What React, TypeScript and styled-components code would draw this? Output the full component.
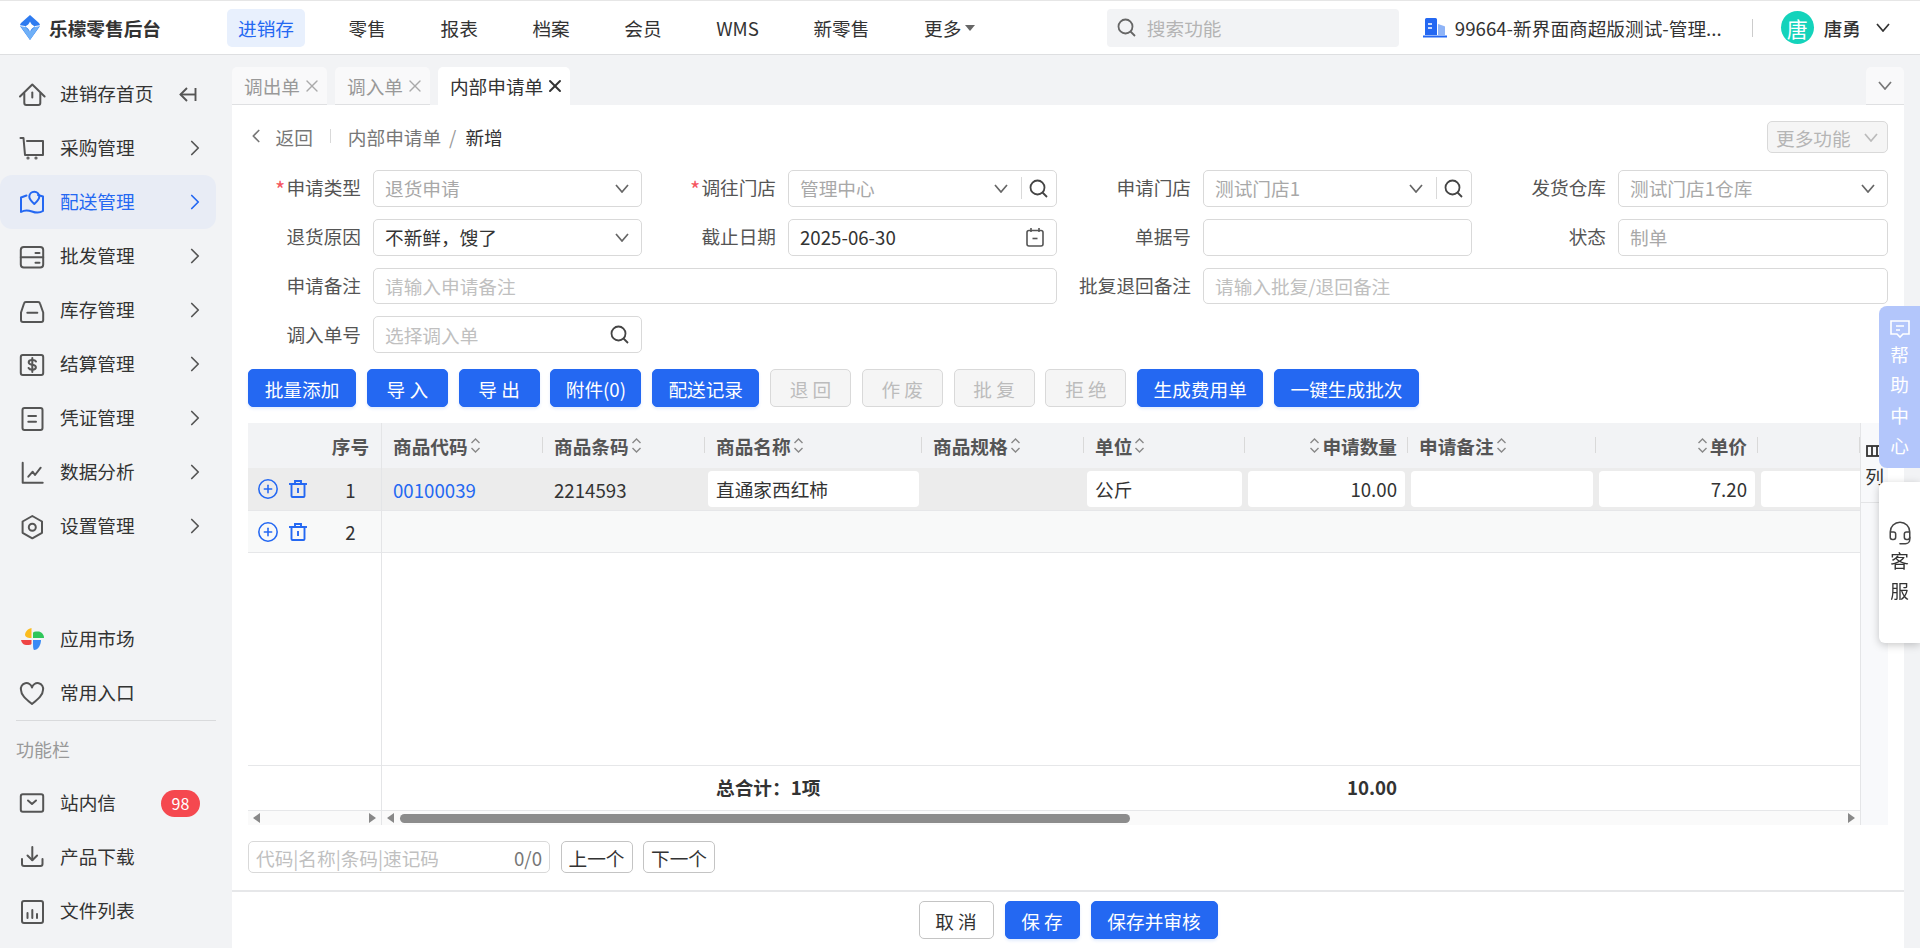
import React from 'react'
import styled, { createGlobalStyle } from 'styled-components'
import { ChevronLeft, ChevronRight, CirclePlus, Headset, X } from 'lucide-react'

const BLUE = '#2468f2'
const COLUMNS = '161px 162px 217px 162px 161px 163px 188px 162px 102px'

const GlobalStyle = createGlobalStyle`
  html, body {
    margin: 0;
    height: 100%;
    overflow: hidden;
    background: #f2f3f5;
  }
  body, button {
    font-family: "Noto Sans CJK SC", "Noto Sans", sans-serif;
    font-size: 18.67px;
    color: #333;
  }
  * {
    box-sizing: border-box;
  }
`

const Root = styled.div`
  height: 100vh;
  display: flex;
  flex-direction: column;
`

/* top bar */
const Header = styled.header`
  height: 55px;
  flex: none;
  display: flex;
  align-items: center;
  background: #fff;
  border-top: 1px solid #e6e6e6;
  border-bottom: 1px solid #dedfe1;
  padding-right: 30px;
`
const Brand = styled.div`
  width: 227px;
  padding-left: 20px;
  display: flex;
  align-items: center;
  gap: 9px;
  font-weight: 700;
  white-space: nowrap;
`
const TopNav = styled.nav`
  display: flex;
  align-items: center;
  gap: 32.6px;
`
const TopNavItem = styled.div<{ $active?: boolean }>`
  height: 38px;
  padding: 0 11px;
  display: flex;
  align-items: center;
  gap: 4px;
  border-radius: 5px;
  white-space: nowrap;
  color: ${(p) => (p.$active ? BLUE : '#333')};
  background: ${(p) => (p.$active ? '#e8f0fd' : 'transparent')};
`
const Caret = styled.span`
  width: 0;
  height: 0;
  border-left: 5px solid transparent;
  border-right: 5px solid transparent;
  border-top: 6px solid #666;
`
const SearchBox = styled.div`
  width: 292px;
  height: 38px;
  margin-left: auto;
  padding: 0 10px;
  display: flex;
  align-items: center;
  gap: 11px;
  background: #f2f3f5;
  border-radius: 4px;
  color: #b4b4b4;
`
const Company = styled.div`
  margin-left: 24px;
  display: flex;
  align-items: center;
  gap: 8px;
  white-space: nowrap;
`
const VDivider = styled.span`
  width: 1px;
  height: 18px;
  margin: 0 28px 0 30px;
  background: #ccc;
`
const Avatar = styled.span`
  width: 33px;
  height: 33px;
  border-radius: 50%;
  background: #14d3bb;
  color: #fff;
  font-size: 21px;
  display: flex;
  align-items: center;
  justify-content: center;
`
const UserName = styled.span`
  margin: 0 15px 0 10px;
  font-weight: 500;
`

/* sidebar */
const Body = styled.div`
  flex: 1;
  min-height: 0;
  display: flex;
`
const Sidebar = styled.aside`
  width: 232px;
  flex: none;
  padding: 12px 0 10px;
  display: flex;
  flex-direction: column;
`
const SideGrow = styled.div`
  flex: 1;
`
const SideItem = styled.div<{ $active?: boolean }>`
  width: 216px;
  height: 54px;
  flex: none;
  padding: 0 16px 0 20px;
  display: flex;
  align-items: center;
  gap: 16px;
  border-radius: 12px;
  white-space: nowrap;
  color: ${(p) => (p.$active ? BLUE : '#333')};
  background: ${(p) => (p.$active ? '#e8ecf5' : 'transparent')};
  svg {
    color: ${(p) => (p.$active ? BLUE : '#555')};
  }
`
const SideLabel = styled.span`
  margin-bottom: 3px;
`
const SideEnd = styled.span<{ $shift?: number }>`
  margin-left: auto;
  margin-right: ${(p) => p.$shift ?? 0}px;
  display: flex;
  align-items: center;
`
const SideIconSvg = styled.svg`
  width: 24px;
  height: 24px;
  flex: none;
  overflow: visible;
  fill: none;
  stroke: currentColor;
  stroke-width: 2;
  stroke-linecap: round;
  stroke-linejoin: round;
`
const Section = styled.div`
  width: 200px;
  height: 56px;
  margin-left: 16px;
  border-top: 1px solid #d9dadc;
  display: flex;
  align-items: center;
  color: #999;
  font-size: 18px;
`
const Badge = styled.span`
  min-width: 39px;
  height: 27px;
  border-radius: 14px;
  background: #f5484f;
  color: #fff;
  font-size: 16px;
  display: flex;
  align-items: center;
  justify-content: center;
`

/* tabs */
const Main = styled.main`
  flex: 1;
  min-width: 0;
  margin-right: 16px;
  display: flex;
  flex-direction: column;
`
const TabBar = styled.div`
  height: 50px;
  flex: none;
  padding-top: 12px;
  display: flex;
  gap: 8px;
`
const Tab = styled.div<{ $active?: boolean }>`
  height: 38px;
  padding: 0 5px 0 12px;
  display: flex;
  align-items: center;
  gap: 2px;
  border-radius: 5px 5px 0 0;
  background: ${(p) => (p.$active ? '#fff' : '#f9f9fa')};
  color: ${(p) => (p.$active ? '#333' : '#999')};
  border-bottom: 1px solid ${(p) => (p.$active ? '#fff' : '#dfe0e2')};
`
const TabMore = styled(Tab)`
  width: 38px;
  margin-left: auto;
  padding: 0;
  justify-content: center;
  color: #777;
`

/* panel */
const Panel = styled.div`
  flex: 1;
  min-height: 0;
  background: #fff;
  padding-top: 16px;
  display: flex;
  flex-direction: column;
`
const Inner = styled.div`
  padding: 0 16px;
`
const CrumbRow = styled.div`
  height: 32px;
  padding-bottom: 2px;
  display: flex;
  align-items: center;
  color: #777;
`
const Back = styled.span`
  margin-left: -3px;
  display: flex;
  align-items: center;
  gap: 8.5px;
`
const CrumbLine = styled.span`
  width: 1px;
  height: 14px;
  margin: 0 16.5px 0 17.5px;
  background: #d9d9d9;
`
const CrumbSep = styled.span`
  margin: 0 9px 0 8px;
  color: #999;
`
const CrumbNow = styled.span`
  color: #333;
`
const MoreButton = styled.div`
  width: 121px;
  height: 32px;
  flex: none;
  margin-top: 2px;
  margin-left: auto;
  padding: 0 9px 0 8px;
  display: flex;
  align-items: center;
  justify-content: space-between;
  background: #f5f5f5;
  border: 1px solid #d9d9d9;
  border-radius: 5px;
  color: #b5b5b5;
`
const FormGrid = styled.div`
  margin-top: 17px;
  display: grid;
  grid-template-columns: 113px 269px 122px 269px 122px 269px 122px 270px;
  grid-auto-rows: 36.75px;
  column-gap: 12px;
  row-gap: 12px;
  align-items: center;
`
const Label = styled.label`
  margin-bottom: 3px;
  text-align: right;
  white-space: nowrap;
  color: #555;
`
const Req = styled.span`
  display: inline-block;
  width: 11.5px;
  font-size: 22px;
  line-height: 1;
  vertical-align: -3px;
  text-align: left;
  color: #f5555f;
`
const Field = styled.div<{ $span?: number; $lookup?: boolean }>`
  height: 100%;
  grid-column: span ${(p) => p.$span ?? 1};
  padding: 0 ${(p) => (p.$lookup ? 8 : 12)}px 0 11px;
  display: flex;
  align-items: center;
  gap: 10px;
  border: 1px solid #d9d9d9;
  border-radius: 5px;
  background: #fff;
  color: #777;
`
const FieldText = styled.span<{ $tone?: 'value' | 'muted' | 'hint' }>`
  flex: 1;
  margin-bottom: 1px;
  white-space: nowrap;
  color: ${(p) => (p.$tone === 'value' ? '#333' : p.$tone === 'muted' ? '#a8a8a8' : '#c0c0c0')};
`
const FieldLine = styled.span`
  width: 1px;
  height: 22px;
  margin: 0 -3px 0 3px;
  background: #d9d9d9;
`

/* buttons */
const ButtonRow = styled.div`
  margin-top: 16px;
  display: flex;
  gap: 10.8px;
`
const Button = styled.button<{ $kind?: 'primary' | 'off' | 'plain'; $w: number }>`
  width: ${(p) => p.$w}px;
  height: 38px;
  flex: none;
  padding: 0;
  font-family: inherit;
  font-size: inherit;
  white-space: nowrap;
  border-radius: 5px;
  color: ${(p) => (p.$kind === 'off' ? '#bcbcbc' : p.$kind === 'plain' ? '#333' : '#fff')};
  background: ${(p) => (p.$kind === 'off' ? '#f5f5f5' : p.$kind === 'plain' ? '#fff' : BLUE)};
  border: 1px solid ${(p) => (p.$kind === 'off' ? '#d9d9d9' : p.$kind === 'plain' ? '#c4c4c4' : BLUE)};
  box-shadow: ${(p) => (p.$kind === 'off' || p.$kind === 'plain' ? 'none' : '0 2px 3px rgba(36, 104, 242, 0.12)')};
`

/* table */
const Table = styled.div`
  margin-top: 16px;
  height: 402px;
  display: flex;
`
const FixedPane = styled.div`
  width: 134px;
  flex: none;
  display: flex;
  flex-direction: column;
  border-right: 1px solid #e4e5e7;
`
const ScrollPane = styled.div`
  width: 1478px;
  flex: none;
  overflow: hidden;
  display: flex;
  flex-direction: column;
`
const ColumnPane = styled.div`
  width: 28px;
  flex: none;
  background: #f8f9fb;
  border-left: 1px solid #e4e5e7;
`
const ColumnPick = styled.div`
  height: 80px;
  padding-top: 22px;
  display: flex;
  flex-direction: column;
  align-items: center;
  gap: 10px;
  line-height: 1;
  border-bottom: 1px solid #e4e5e7;
`
const FixedRow = styled.div<{ $h: number; $bg: string; $plain?: boolean }>`
  height: ${(p) => p.$h}px;
  flex: none;
  display: grid;
  grid-template-columns: 72px 61px;
  align-items: center;
  background: ${(p) => p.$bg};
  border-bottom: ${(p) => (p.$plain ? 'none' : '1px solid #e6e7e9')};
`
const SeqCell = styled.div<{ $head?: boolean }>`
  grid-column: 2;
  text-align: center;
  font-weight: ${(p) => (p.$head ? 700 : 400)};
  color: ${(p) => (p.$head ? '#555' : '#333')};
`
const RowTools = styled.div`
  padding-left: 9px;
  display: flex;
  align-items: center;
  gap: 10px;
  color: ${BLUE};
`
const Grow = styled.div`
  flex: 1;
`
const TotalRow = styled.div`
  height: 45px;
  flex: none;
  padding-bottom: 3px;
  border-top: 1px solid #e6e7e9;
  display: grid;
  grid-template-columns: ${COLUMNS};
  align-items: center;
  font-weight: 700;
`
const BarRow = styled.div`
  height: 15px;
  flex: none;
  padding: 0 5px;
  display: flex;
  align-items: center;
  justify-content: space-between;
  background: #fafafa;
  border-top: 1px solid #e6e7e9;
`
const BarArrow = styled.span<{ $dir: 'left' | 'right' }>`
  width: 0;
  height: 0;
  flex: none;
  border-top: 5px solid transparent;
  border-bottom: 5px solid transparent;
  border-${(p) => (p.$dir === 'left' ? 'right' : 'left')}: 7px solid #888;
`
const BarThumb = styled.span`
  width: 730px;
  height: 9px;
  margin: 0 auto 0 6px;
  border-radius: 5px;
  background: #8c8c8c;
`
const DataRow = styled.div<{ $h: number; $bg: string; $plain?: boolean }>`
  height: ${(p) => p.$h}px;
  flex: none;
  display: grid;
  grid-template-columns: ${COLUMNS};
  align-items: center;
  background: ${(p) => p.$bg};
  border-bottom: ${(p) => (p.$plain ? 'none' : '1px solid #e6e7e9')};
`
const HeadCell = styled.div<{ $right?: boolean }>`
  position: relative;
  height: 100%;
  padding: 0 11px;
  display: flex;
  align-items: center;
  justify-content: ${(p) => (p.$right ? 'flex-end' : 'flex-start')};
  gap: 2px;
  font-weight: 700;
  color: #555;
  white-space: nowrap;
  &::after {
    content: '';
    position: absolute;
    right: 0;
    top: 14px;
    width: 1px;
    height: 16px;
    background: #d9d9d9;
  }
`
const Cell = styled.div<{ $right?: boolean; $link?: boolean }>`
  padding: 0 11px;
  text-align: ${(p) => (p.$right ? 'right' : 'left')};
  color: ${(p) => (p.$link ? BLUE : '#333')};
  white-space: nowrap;
`
const CellInput = styled.div<{ $right?: boolean; $open?: boolean }>`
  height: 36px;
  margin: 0 ${(p) => (p.$open ? 0 : 3)}px 1px 3px;
  padding: 0 8px;
  display: flex;
  align-items: center;
  justify-content: ${(p) => (p.$right ? 'flex-end' : 'flex-start')};
  background: #fff;
  border-radius: ${(p) => (p.$open ? '4px 0 0 4px' : '4px')};
`

/* pager */
const Pager = styled.div`
  margin-top: 16px;
  display: flex;
  gap: 10.5px;
`
const PagerInput = styled.div`
  width: 302px;
  height: 32px;
  padding: 0 7px;
  display: flex;
  align-items: center;
  justify-content: space-between;
  color: #c0c0c0;
  border: 1px solid #d9d9d9;
  border-radius: 5px;
`
const PagerCount = styled.span`
  color: #777;
`
const PagerButton = styled.div`
  width: 72px;
  height: 32px;
  display: flex;
  align-items: center;
  justify-content: center;
  border: 1px solid #c4c4c4;
  border-radius: 5px;
`
const Footer = styled.div`
  margin-top: auto;
  height: 58px;
  padding-top: 9px;
  display: flex;
  justify-content: center;
  gap: 11px;
  border-top: 2px solid #e6e7e9;
`

/* floating tabs on the right edge */
const HelpTab = styled.div`
  position: fixed;
  top: 306px;
  right: 0;
  width: 41px;
  height: 162px;
  padding-top: 14px;
  display: flex;
  flex-direction: column;
  align-items: center;
  gap: 11.4px;
  line-height: 1;
  color: #fff;
  background: #b3c6fb;
  border-radius: 8px 0 0 8px;
`
const HelpGlyph = styled.svg`
  margin-bottom: -5px;
  fill: none;
  stroke: #fff;
  stroke-width: 1.6;
`
const ServiceTab = styled.div`
  position: fixed;
  top: 482px;
  right: 0;
  width: 41px;
  height: 161px;
  padding-top: 38px;
  display: flex;
  flex-direction: column;
  align-items: center;
  gap: 11.4px;
  line-height: 1;
  background: #fff;
  border-radius: 6px 0 0 6px;
  box-shadow: 0 2px 8px rgba(0, 0, 0, 0.22);
`
const ServiceGlyph = styled(Headset)`
  margin-bottom: -6px;
`

const sideIcons: Record<string, React.ReactNode> = {
  home: (
    <>
      <path d="M0 14.5 12.3 2.5l12.3 12" />
      <path d="M4.3 11.5V21a2 2 0 0 0 2 2h12a2 2 0 0 0 2-2v-9.5" />
      <path d="M12.3 10.5v5" />
    </>
  ),
  cart: (
    <>
      <path d="M.5 2h3l1.5 17h18V5H7" />
      <circle cx="8" cy="22" r=".6" />
      <circle cx="16" cy="22" r=".6" />
    </>
  ),
  delivery: (
    <>
      <path d="M6.5 5.5 1 7.5V22c4-2.5 7-2 11-.5s8 1.5 11-.5V6.5L18 5" />
      <path d="M14.3 1.7c-2.8 0-5 2.2-5 5 0 2.6 2.5 5 5 7.3 2.5-2.3 5-4.700 5-7.300 0-2.800-2.200-5-5-5z" />
    </>
  ),
  wholesale: (
    <>
      <rect x=".8" y="3" width="22.4" height="20.5" rx="3" />
      <path d="M.8 13.3h22.4" />
      <path d="M15.500 9h4" />
      <path d="M15.500 18.700h4" />
    </>
  ),
  stock: (
    <>
      <path d="M1 14.500 4 5.500A2 2 0 0 1 6 4h12a2 2 0 0 1 2 1.500l3.200 9V22a2 2 0 0 1-2 2H3a2 2 0 0 1-2-2z" />
      <path d="M7.300 14.700h10" />
    </>
  ),
  settle: (
    <>
      <rect x=".8" y="3" width="22.4" height="20" rx="2" />
      <path d="M16 9.500c-.5-1-1.800-1.500-3.700-1.500-2.300 0-3.600.9-3.600 2.300 0 1.500 1.300 2.100 3.600 2.500 2.300.4 3.600 1.100 3.600 2.500 0 1.500-1.400 2.400-3.600 2.400-1.900 0-3.200-.6-3.700-1.700" />
      <path d="M12.300 6v14" />
    </>
  ),
  voucher: (
    <>
      <rect x="2.5" y="2" width="20" height="22" rx="2" />
      <path d="M8.300 10H16" />
      <path d="M8.300 15.700H16" />
    </>
  ),
  chart: (
    <>
      <path d="M2.700 2.700V22.700h20" />
      <path d="M8.300 16.700l4.400-5 2.300 3.300 5.700-7.300" />
    </>
  ),
  settings: (
    <>
      <path d="M12.300 2l9.700 5.500v11.300l-9.700 5.500-9.700-5.500V7.500z" />
      <circle cx="12.3" cy="13.2" r="3.5" />
    </>
  ),
  heart: <path d="M12 23C6 18 1 14 1 9a5.500 5.500 0 0 1 11-2.500A5.500 5.500 0 0 1 23 9c0 5-5 9-11 14z" />,
  mail: (
    <>
      <rect x=".8" y="3.2" width="22.4" height="17.6" rx="2" />
      <path d="M8 9.500l4 3.500 4-3.500" />
    </>
  ),
  download: (
    <>
      <path d="M12.300 2v13" />
      <path d="M7.500 10.500l4.800 4.800 4.800-4.800" />
      <path d="M2 14v5a2 2 0 0 0 2 2h16.500a2 2 0 0 0 2-2v-5" />
    </>
  ),
  files: (
    <>
      <rect x="2" y="2" width="21" height="22" rx="2" />
      <path d="M7.500 14v5" />
      <path d="M12.300 11v8" />
      <path d="M17 15v4" />
    </>
  ),
}

const SideIcon = ({ name }: { name: string }) => <SideIconSvg viewBox="0 0 24 24">{sideIcons[name]}</SideIconSvg>

const Pinwheel = () => (
  <svg width="24" height="24" viewBox="0 0 24 24" style={{ overflow: 'visible', flex: 'none' }}>
    <path d="M11.500 11C8.500 11 5.500 10.500 5 8c0-3 2.500-6 6.500-7z" fill="#fbbc1e" />
    <path d="M13 11V6c0-1.500 2-1.500 5-1.500S24 7 24 11z" fill="#2fc65a" />
    <path d="M13 13h8c0 5-3 10-7 10-1-1-1-4-1-10z" fill="#3b8bf5" />
    <path d="M11.500 13v3.500C11.500 18 9 18 6 18s-4.500-3-5-5z" fill="#ef4444" />
  </svg>
)

const Logo = () => (
  <svg width="20" height="25" viewBox="0 0 20 25">
    <path d="M10 0 19 8c1.300 1.500 1.300 3 0 4.500L10 25 1 12.500C-.3 11-.3 9.500 1 8z" fill="#2e7bf0" />
    <path d="M.5 11 5 11.500 10 17l5-5.500 4.500-.5L10 25z" fill="#6fb0f7" />
    <path d="M10 6.500c.8 2.300 2.400 4 5 5-2.600 1.300-4.200 3-5 5.500-.8-2.500-2.400-4.200-5-5.500 2.600-1 4.200-2.700 5-5z" fill="#fff" />
    <path d="M0 10.700 5 11.500M20 10.700l-5 .8" stroke="#fff" strokeWidth="1" />
  </svg>
)

const BuildingIcon = () => (
  <svg width="24" height="20" viewBox="0 0 24 20">
    <path d="M2 1.500A1.500 1.500 0 0 1 3.500 0h9A1.500 1.500 0 0 1 14 1.500V17H2z" fill={BLUE} />
    <path d="M15 6l6 2a1 1 0 0 1 1 1v8h-7z" fill="#8fb4f7" />
    <path d="M5 6h4M5 10h4" stroke="#fff" strokeWidth="1.6" />
    <path d="M0 18.500h24" stroke={BLUE} strokeWidth="2" />
  </svg>
)

const SortIcon = () => (
  <svg width="11" height="17" viewBox="0 0 11 17" fill="none" stroke="#888" strokeWidth="1.4">
    <path d="M1.500 6 5.500 2l4 4" />
    <path d="M1.500 11l4 4 4-4" />
  </svg>
)

const TrashIcon = () => (
  <svg width="18" height="18" viewBox="0 0 18 18" fill="none" stroke="currentColor" strokeWidth="1.9">
    <path d="M0 4h18" />
    <path d="M6 4V1h6v3" />
    <rect x="2.5" y="4" width="13" height="13" rx="1" />
    <path d="M9 8v5" />
  </svg>
)

const CalendarIcon = () => (
  <svg width="18" height="20" viewBox="0 0 18 20" fill="none" stroke="#555" strokeWidth="1.6">
    <rect x="1" y="3.5" width="16" height="15.5" rx="2" />
    <path d="M5 1v4M13 1v4" />
    <path d="M6.500 11.500h5" />
  </svg>
)

const ColumnsIcon = () => (
  <svg width="17" height="12" viewBox="0 0 17 12" fill="none" stroke="#333" strokeWidth="1.8">
    <rect x="1" y="1" width="15" height="10" />
    <path d="M6 1v10M11 1v10" />
  </svg>
)

const CollapseIcon = () => (
  <svg width="18" height="15" viewBox="0 0 18 15" fill="none" stroke="currentColor" strokeWidth="1.9">
    <path d="M8 1 1.500 7.500 8 14" />
    <path d="M1.500 7.500H16" />
    <path d="M16.500 1v13" />
  </svg>
)

const ChevronGlyph = ({ color = '#666', w = 14 }: { color?: string; w?: number }) => (
  <svg width={w} height={(w * 9) / 14} viewBox="0 0 14 9" fill="none" stroke={color} strokeWidth="1.7" style={{ flex: 'none' }}>
    <path d="M1 1l6 7 6-7" />
  </svg>
)

const SearchGlyph = ({ color = '#444' }: { color?: string }) => (
  <svg width="19" height="19" viewBox="0 0 19 19" fill="none" stroke={color} strokeWidth="1.8" style={{ flex: 'none' }}>
    <circle cx="8.5" cy="8.5" r="7" />
    <path d="M13.500 13.500l4.500 4.500" />
  </svg>
)

const mainMenu = [
  { icon: 'cart', label: '采购管理' },
  { icon: 'delivery', label: '配送管理', active: true },
  { icon: 'wholesale', label: '批发管理' },
  { icon: 'stock', label: '库存管理' },
  { icon: 'settle', label: '结算管理' },
  { icon: 'voucher', label: '凭证管理' },
  { icon: 'chart', label: '数据分析' },
  { icon: 'settings', label: '设置管理' },
]

const topNav = ['零售', '报表', '档案', '会员', 'WMS', '新零售']

const actionButtons = [
  { text: '批量添加', w: 108 },
  { text: '导 入', w: 81 },
  { text: '导 出', w: 81 },
  { text: '附件(0)', w: 91 },
  { text: '配送记录', w: 107 },
  { text: '退 回', w: 81, off: true },
  { text: '作 废', w: 81, off: true },
  { text: '批 复', w: 81, off: true },
  { text: '拒 绝', w: 81, off: true },
  { text: '生成费用单', w: 126 },
  { text: '一键生成批次', w: 145 },
]

export default function App() {
  return (
    <Root>
      <GlobalStyle />
      <Header>
        <Brand>
          <Logo />
          乐檬零售后台
        </Brand>
        <TopNav>
          <TopNavItem $active>进销存</TopNavItem>
          {topNav.map((item) => (
            <TopNavItem key={item}>{item}</TopNavItem>
          ))}
          <TopNavItem>
            更多
            <Caret />
          </TopNavItem>
        </TopNav>
        <SearchBox>
          <SearchGlyph color="#666" />
          搜索功能
        </SearchBox>
        <Company>
          <BuildingIcon />
          99664-新界面商超版测试-管理...
        </Company>
        <VDivider />
        <Avatar>唐</Avatar>
        <UserName>唐勇</UserName>
        <ChevronGlyph color="#333" />
      </Header>
      <Body>
        <Sidebar>
          <SideItem>
            <SideIcon name="home" />
            <SideLabel>进销存首页</SideLabel>
            <SideEnd $shift={3}>
              <CollapseIcon />
            </SideEnd>
          </SideItem>
          {mainMenu.map((item) => (
            <SideItem key={item.label} $active={item.active}>
              <SideIcon name={item.icon} />
              <SideLabel>{item.label}</SideLabel>
              <SideEnd $shift={-8}>
                <ChevronRight size={26} strokeWidth={1.6} />
              </SideEnd>
            </SideItem>
          ))}
          <SideGrow />
          <SideItem>
            <Pinwheel />
            <SideLabel>应用市场</SideLabel>
          </SideItem>
          <SideItem>
            <SideIcon name="heart" />
            <SideLabel>常用入口</SideLabel>
          </SideItem>
          <Section>功能栏</Section>
          <SideItem>
            <SideIcon name="mail" />
            <SideLabel>站内信</SideLabel>
            <SideEnd>
              <Badge>98</Badge>
            </SideEnd>
          </SideItem>
          <SideItem>
            <SideIcon name="download" />
            <SideLabel>产品下载</SideLabel>
          </SideItem>
          <SideItem>
            <SideIcon name="files" />
            <SideLabel>文件列表</SideLabel>
          </SideItem>
        </Sidebar>
        <Main>
          <TabBar>
            <Tab>
              调出单
              <X size={20} strokeWidth={1.6} color="#aaa" />
            </Tab>
            <Tab>
              调入单
              <X size={20} strokeWidth={1.6} color="#aaa" />
            </Tab>
            <Tab $active>
              内部申请单
              <X size={20} strokeWidth={2.4} />
            </Tab>
            <TabMore>
              <ChevronGlyph color="#777" />
            </TabMore>
          </TabBar>
          <Panel>
            <Inner>
              <CrumbRow>
                <Back>
                  <ChevronLeft size={22} strokeWidth={1.8} />
                  返回
                </Back>
                <CrumbLine />
                内部申请单
                <CrumbSep>/</CrumbSep>
                <CrumbNow>新增</CrumbNow>
                <MoreButton>
                  更多功能
                  <ChevronGlyph color="#bbb" />
                </MoreButton>
              </CrumbRow>
              <FormGrid>
                <Label>
                  <Req>*</Req>申请类型
                </Label>
                <Field>
                  <FieldText $tone="muted">退货申请</FieldText>
                  <ChevronGlyph />
                </Field>
                <Label>
                  <Req>*</Req>调往门店
                </Label>
                <Field $lookup>
                  <FieldText $tone="muted">管理中心</FieldText>
                  <ChevronGlyph />
                  <FieldLine />
                  <SearchGlyph />
                </Field>
                <Label>申请门店</Label>
                <Field $lookup>
                  <FieldText $tone="muted">测试门店1</FieldText>
                  <ChevronGlyph />
                  <FieldLine />
                  <SearchGlyph />
                </Field>
                <Label>发货仓库</Label>
                <Field>
                  <FieldText $tone="muted">测试门店1仓库</FieldText>
                  <ChevronGlyph />
                </Field>

                <Label>退货原因</Label>
                <Field>
                  <FieldText $tone="value">不新鲜，馊了</FieldText>
                  <ChevronGlyph />
                </Field>
                <Label>截止日期</Label>
                <Field>
                  <FieldText $tone="value">2025-06-30</FieldText>
                  <CalendarIcon />
                </Field>
                <Label>单据号</Label>
                <Field />
                <Label>状态</Label>
                <Field>
                  <FieldText $tone="muted">制单</FieldText>
                </Field>

                <Label>申请备注</Label>
                <Field $span={3}>
                  <FieldText>请输入申请备注</FieldText>
                </Field>
                <Label>批复退回备注</Label>
                <Field $span={3}>
                  <FieldText>请输入批复/退回备注</FieldText>
                </Field>

                <Label>调入单号</Label>
                <Field>
                  <FieldText>选择调入单</FieldText>
                  <SearchGlyph />
                </Field>
              </FormGrid>
              <ButtonRow>
                {actionButtons.map((b) => (
                  <Button key={b.text} $kind={b.off ? 'off' : 'primary'} $w={b.w}>
                    {b.text}
                  </Button>
                ))}
              </ButtonRow>
              <Table>
                <FixedPane>
                  <FixedRow $h={45} $bg="#f2f3f5" $plain>
                    <SeqCell $head>序号</SeqCell>
                  </FixedRow>
                  <FixedRow $h={43} $bg="#ececec">
                    <RowTools>
                      <CirclePlus size={22} strokeWidth={1.7} />
                      <TrashIcon />
                    </RowTools>
                    <SeqCell>1</SeqCell>
                  </FixedRow>
                  <FixedRow $h={42} $bg="#f8f9f9">
                    <RowTools>
                      <CirclePlus size={22} strokeWidth={1.7} />
                      <TrashIcon />
                    </RowTools>
                    <SeqCell>2</SeqCell>
                  </FixedRow>
                  <Grow />
                  <TotalRow />
                  <BarRow>
                    <BarArrow $dir="left" />
                    <BarArrow $dir="right" />
                  </BarRow>
                </FixedPane>
                <ScrollPane>
                  <DataRow $h={45} $bg="#f2f3f5" $plain>
                    <HeadCell>
                      商品代码
                      <SortIcon />
                    </HeadCell>
                    <HeadCell>
                      商品条码
                      <SortIcon />
                    </HeadCell>
                    <HeadCell>
                      商品名称
                      <SortIcon />
                    </HeadCell>
                    <HeadCell>
                      商品规格
                      <SortIcon />
                    </HeadCell>
                    <HeadCell>
                      单位
                      <SortIcon />
                    </HeadCell>
                    <HeadCell $right>
                      <SortIcon />
                      申请数量
                    </HeadCell>
                    <HeadCell>
                      申请备注
                      <SortIcon />
                    </HeadCell>
                    <HeadCell $right>
                      <SortIcon />
                      单价
                    </HeadCell>
                    <HeadCell />
                  </DataRow>
                  <DataRow $h={43} $bg="#ececec">
                    <Cell $link>00100039</Cell>
                    <Cell>2214593</Cell>
                    <CellInput>直通家西红柿</CellInput>
                    <Cell />
                    <CellInput>公斤</CellInput>
                    <CellInput $right>10.00</CellInput>
                    <CellInput />
                    <CellInput $right>7.20</CellInput>
                    <CellInput $open />
                  </DataRow>
                  <DataRow $h={42} $bg="#f8f9f9" />
                  <Grow />
                  <TotalRow>
                    <Cell />
                    <Cell />
                    <Cell>总合计：1项</Cell>
                    <Cell />
                    <Cell />
                    <Cell $right>10.00</Cell>
                  </TotalRow>
                  <BarRow>
                    <BarArrow $dir="left" />
                    <BarThumb />
                    <BarArrow $dir="right" />
                  </BarRow>
                </ScrollPane>
                <ColumnPane>
                  <ColumnPick>
                    <ColumnsIcon />
                    列
                  </ColumnPick>
                </ColumnPane>
              </Table>
              <Pager>
                <PagerInput>
                  代码|名称|条码|速记码
                  <PagerCount>0/0</PagerCount>
                </PagerInput>
                <PagerButton>上一个</PagerButton>
                <PagerButton>下一个</PagerButton>
              </Pager>
            </Inner>
            <Footer>
              <Button $kind="plain" $w={75}>
                取 消
              </Button>
              <Button $w={75}>保 存</Button>
              <Button $w={127}>保存并审核</Button>
            </Footer>
          </Panel>
        </Main>
      </Body>
      <HelpTab>
        <HelpGlyph width="20" height="19" viewBox="0 0 20 19">
          <path d="M1 1h18v13h-6l-3 3-3-3H1z" />
          <path d="M6 6h8M6 10h4" />
        </HelpGlyph>
        <span>帮</span>
        <span>助</span>
        <span>中</span>
        <span>心</span>
      </HelpTab>
      <ServiceTab>
        <ServiceGlyph size={26} color="#444" strokeWidth={1.4} />
        <span>客</span>
        <span>服</span>
      </ServiceTab>
    </Root>
  )
}
